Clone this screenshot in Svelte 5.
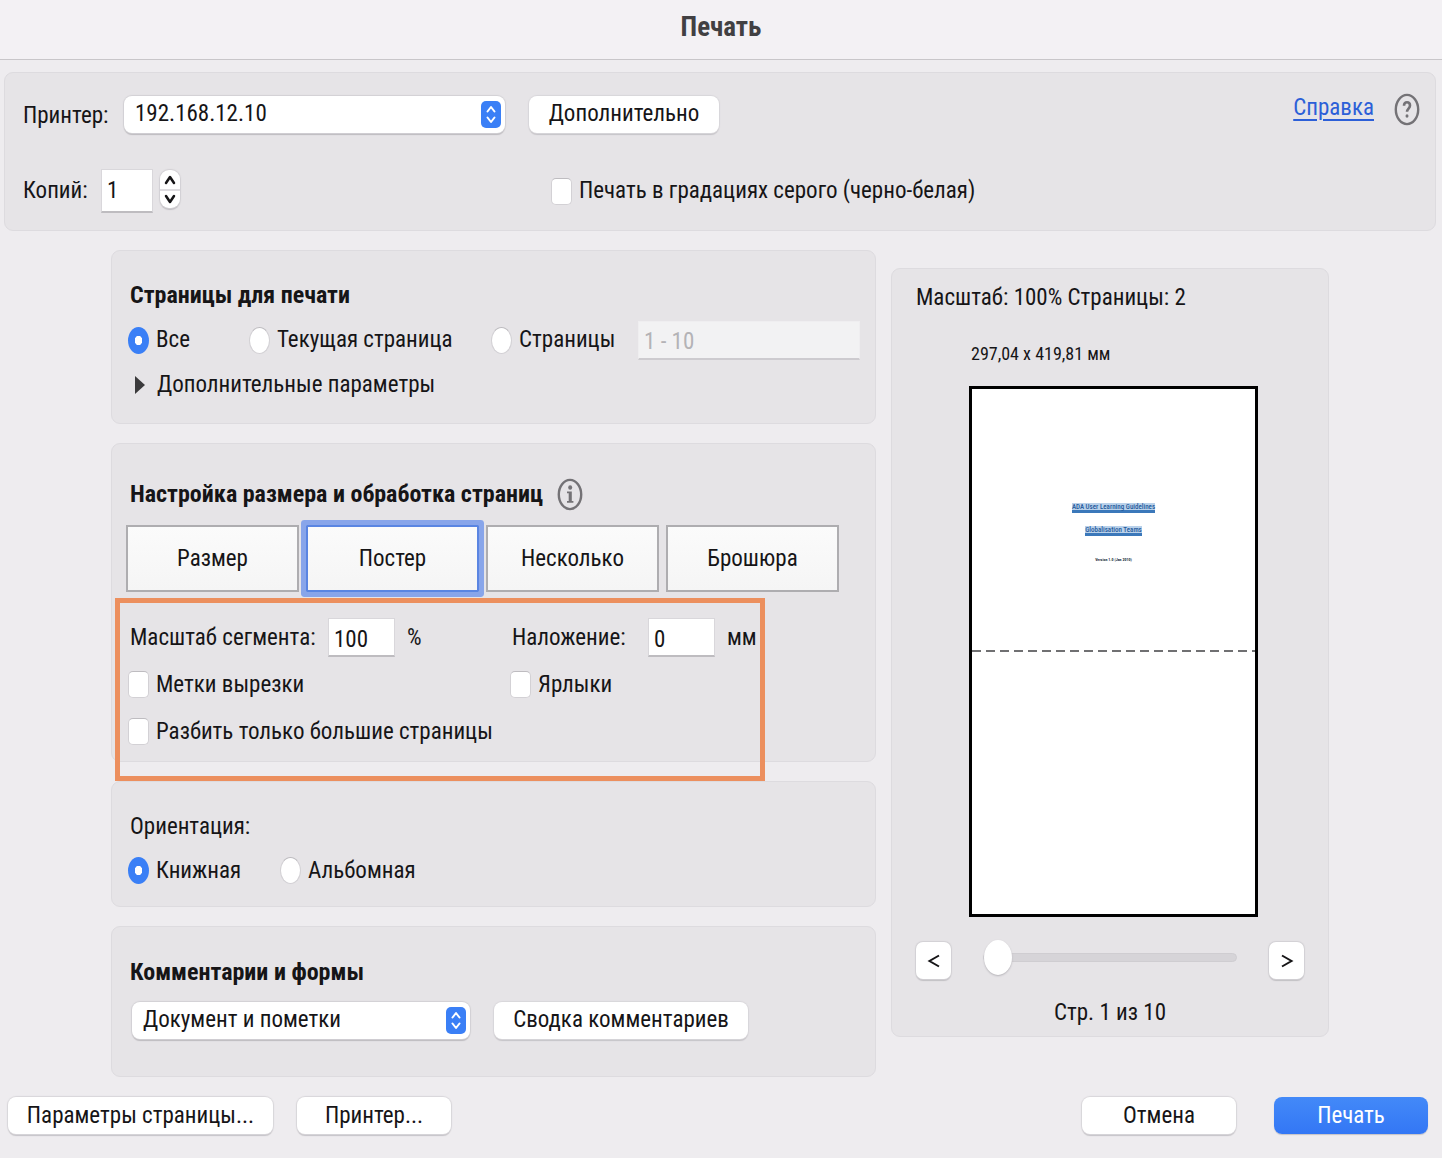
<script>
  let printer = $state('192.168.12.10');
  let copies = $state('1');
  let grayscale = $state(false);
  let pages = $state('all');
  let mode = $state('Постер');
  let scale = $state('100');
  let overlap = $state('0');
  let orientation = $state('portrait');
  let forms = $state('Документ и пометки');
  let page = $state(1);
  const modes = ['Размер', 'Постер', 'Несколько', 'Брошюра'];
  const pageCount = 10;

  function step(delta) {
    copies = String(Math.max(1, Number(copies) + delta));
  }
</script>

{#snippet popupIcon()}
  <svg class="popup-icon" viewBox="0 0 20 27" aria-hidden="true">
    <rect width="20" height="27" rx="5" />
    <path d="M6.5 10.5 10 6 13.500 10.500M6.500 16.500 10 21 13.500 16.500" />
  </svg>
{/snippet}

<div class="dialog">
  <header class="titlebar"><h1>Печать</h1></header>

  <section class="panel top">
    <div class="row first">
      <label for="printer">Принтер:</label>
      <div class="popup printer">
        <select id="printer" bind:value={printer}>
          <option>192.168.12.10</option>
        </select>
        {@render popupIcon()}
      </div>
      <button class="push advanced">Дополнительно</button>
      <a class="help" href="#help">Справка</a>
      <button class="icon-button" aria-label="Помощь">
        <svg viewBox="0 0 26 33" width="26" height="33" aria-hidden="true">
          <ellipse cx="13" cy="16.500" rx="11.200" ry="14.600" />
          <path class="mark" d="M10 12.800c0-2.200 1.200-3.500 3-3.500s3 1.200 3 3.200c0 2.900-3 3.200-3 6.300" />
          <ellipse class="dot" cx="13" cy="23" rx="1.500" ry="1.800" />
        </svg>
      </button>
    </div>
    <div class="row second">
      <label for="copies">Копий:</label>
      <input id="copies" class="field copies" type="text" bind:value={copies} />
      <div class="stepper">
        <button aria-label="Больше" onclick={() => step(1)}>
          <svg viewBox="0 0 20 19" aria-hidden="true"><path d="M6 13 10 7 14 13" /></svg>
        </button>
        <button aria-label="Меньше" onclick={() => step(-1)}>
          <svg viewBox="0 0 20 19" aria-hidden="true"><path d="M6 5 10 11 14 5" /></svg>
        </button>
      </div>
      <label class="choice gray"><input type="checkbox" bind:checked={grayscale} />Печать в градациях серого (черно-белая)</label>
    </div>
  </section>

  <main class="content">
    <div class="settings">
      <section class="panel pages">
        <h2>Страницы для печати</h2>
        <div class="page-row">
          <label class="choice"><input type="radio" name="pages" value="all" bind:group={pages} />Все</label>
          <label class="choice"><input type="radio" name="pages" value="current" bind:group={pages} />Текущая страница</label>
          <label class="choice"><input type="radio" name="pages" value="range" bind:group={pages} />Страницы</label>
          <input class="field range" type="text" aria-label="Диапазон страниц" value="1 - 10" disabled />
        </div>
        <button class="disclosure">
          <svg viewBox="0 0 12 20" width="12" height="20" aria-hidden="true"><path d="M1 1 11 10 1 19Z" /></svg>
          Дополнительные параметры
        </button>
      </section>

      <section class="panel sizing">
        <div class="heading">
          <h2>Настройка размера и обработка страниц</h2>
          <button class="icon-button" aria-label="Сведения">
            <svg viewBox="0 0 26 33" width="26" height="33" aria-hidden="true">
              <ellipse cx="13" cy="16.500" rx="11.200" ry="14.600" />
              <ellipse class="dot" cx="13.200" cy="9.500" rx="2" ry="2.200" />
              <path class="dot" d="M10 13.500h4.800v9.500h1.600v1.800H10V23h1.700v-7.700H10Z" />
            </svg>
          </button>
        </div>
        <div class="tabs">
          {#each modes as name}
            <button class:active={mode === name} aria-pressed={mode === name} onclick={() => (mode = name)}>{name}</button>
          {/each}
        </div>
        <div class="options">
          <div class="measure">
            <label for="scale">Масштаб сегмента:</label>
            <input id="scale" class="field small" type="text" bind:value={scale} />
            <span>%</span>
          </div>
          <div class="measure overlap">
            <label for="overlap">Наложение:</label>
            <input id="overlap" class="field small" type="text" bind:value={overlap} />
            <span>мм</span>
          </div>
          <label class="choice"><input type="checkbox" />Метки вырезки</label>
          <label class="choice"><input type="checkbox" />Ярлыки</label>
          <label class="choice"><input type="checkbox" />Разбить только большие страницы</label>
        </div>
        <div class="highlight"></div>
      </section>

      <section class="panel orientation">
        <p>Ориентация:</p>
        <div class="orient-row">
          <label class="choice"><input type="radio" name="orientation" value="portrait" bind:group={orientation} />Книжная</label>
          <label class="choice"><input type="radio" name="orientation" value="landscape" bind:group={orientation} />Альбомная</label>
        </div>
      </section>

      <section class="panel comments">
        <h2>Комментарии и формы</h2>
        <div class="comment-row">
          <div class="popup forms">
            <select aria-label="Комментарии и формы" bind:value={forms}>
              <option>Документ и пометки</option>
            </select>
            {@render popupIcon()}
          </div>
          <button class="push summary">Сводка комментариев</button>
        </div>
      </section>
    </div>

    <section class="panel preview">
      <p class="scale-info">Масштаб: 100% Страницы: 2</p>
      <div class="sheet-area">
        <p class="dimensions">297,04 x 419,81 мм</p>
        <div class="sheet">
          <div class="sheet-half printed">
            <span class="doc-title">ADA User Learning Guidelines</span>
            <span class="doc-title">Globalisation Teams</span>
            <span class="doc-version">Version 1.0 (Jan 2010)</span>
          </div>
          <div class="sheet-half"></div>
        </div>
      </div>
      <div class="pager">
        <button class="nav" aria-label="Предыдущая" onclick={() => (page = Math.max(1, page - 1))}>
          <svg viewBox="0 0 14 16" width="14" height="16" aria-hidden="true"><path d="M12 2.500 2.500 8 12 13.500" /></svg>
        </button>
        <input type="range" min="1" max={pageCount} bind:value={page} aria-label="Страница" />
        <button class="nav" aria-label="Следующая" onclick={() => (page = Math.min(pageCount, page + 1))}>
          <svg viewBox="0 0 14 16" width="14" height="16" aria-hidden="true"><path d="M2 2.500 11.500 8 2 13.500" /></svg>
        </button>
      </div>
      <p class="page-info">Стр. {page} из {pageCount}</p>
    </section>
  </main>

  <footer>
    <button class="push setup">Параметры страницы...</button>
    <button class="push wide">Принтер...</button>
    <span class="spacer"></span>
    <button class="push wide cancel">Отмена</button>
    <button class="push wide primary">Печать</button>
  </footer>
</div>

<style>
  :global(body) {
    background: #eeecef;
  }
  .dialog,
  .dialog * {
    box-sizing: border-box;
  }
  .dialog {
    min-height: 100vh;
    font-family: 'Roboto Condensed', 'Liberation Sans Narrow', Roboto, sans-serif;
    font-size: 23px;
    line-height: 28px;
    color: #161517;
    background: #eeecef;
  }
  h1,
  h2,
  p {
    margin: 0;
  }
  h2 {
    font-size: 24px;
    line-height: 44px;
    font-weight: 700;
    padding-left: 2px;
  }
  button,
  input,
  select {
    font: inherit;
    color: inherit;
    margin: 0;
  }
  button {
    border: 0;
    padding: 0;
    background: none;
  }
  label,
  p,
  button {
    white-space: nowrap;
  }
  .titlebar {
    height: 60px;
    padding-top: 11px;
    text-align: center;
    background: #f3f1f4;
    border-bottom: 1px solid #c8c6c9;
  }
  h1 {
    font-size: 27px;
    line-height: 32px;
    color: #414042;
  }
  .panel {
    background: #e6e4e7;
    border: 1px solid #dddbdf;
    border-radius: 9px;
  }
  .top {
    margin: 12px 6px 0 4px;
    height: 159px;
    padding: 20px 15px 0 18px;
  }
  .row {
    display: flex;
    align-items: center;
  }
  .first {
    height: 42px;
  }
  .second {
    height: 44px;
    margin-top: 34px;
  }
  .first label {
    width: 101px;
    padding-top: 3px;
  }
  .second > label[for] {
    width: 78px;
  }
  .popup {
    position: relative;
  }
  .printer {
    width: 381px;
    margin-right: 24px;
  }
  .forms {
    width: 338px;
  }
  select {
    display: block;
    appearance: none;
    width: 100%;
    height: 37px;
    border: 0;
    border-radius: 8px;
    padding: 0 36px 0 11px;
    background: #fff;
    box-shadow: 0 0 1px 1px #d2d0d4, 0 2px 1px #bbb9bd;
  }
  .popup-icon {
    position: absolute;
    top: 5px;
    right: 4px;
    width: 20px;
    height: 27px;
    pointer-events: none;
  }
  .popup-icon rect {
    fill: #3a7ff6;
  }
  .popup-icon path {
    fill: none;
    stroke: #fff;
    stroke-width: 2;
    stroke-linecap: round;
    stroke-linejoin: round;
  }
  .push {
    height: 37px;
    border-radius: 8px;
    background: #fff;
    box-shadow: 0 0 1px 1px #d8d6da, 0 2px 1px #c4c2c6;
  }
  .advanced {
    width: 190px;
  }
  .help {
    margin: 0 20px 12px auto;
    color: #2c5fd8;
    text-underline-offset: 4px;
    text-decoration-thickness: 2px;
  }
  .first .icon-button {
    margin-bottom: 10px;
  }
  .icon-button {
    width: 26px;
    height: 33px;
  }
  .icon-button svg {
    display: block;
    fill: none;
    stroke: #747276;
    stroke-width: 2.400;
  }
  .icon-button .mark {
    stroke-width: 2.600;
  }
  .icon-button .dot {
    fill: #747276;
    stroke: none;
  }
  .field {
    height: 39px;
    border: 1px solid #d9d7db;
    border-bottom: 2px solid #bebcc0;
    border-radius: 0;
    background: #fff;
    padding: 4px 5px 0;
  }
  .copies {
    width: 52px;
    height: 44px;
    padding-top: 0;
  }
  .stepper {
    display: flex;
    flex-direction: column;
    width: 20px;
    height: 38px;
    margin: 0 371px 4px 7px;
    border-radius: 9px;
    background: #fff;
    box-shadow: 0 0 1px 1px #d2d0d4, 0 2px 1px #c0bec2;
  }
  .stepper button {
    height: 19px;
  }
  .stepper button + button {
    border-top: 2px solid #dddbdf;
  }
  .stepper svg {
    display: block;
    width: 20px;
    height: 19px;
    fill: none;
    stroke: #161517;
    stroke-width: 2.500;
    stroke-linecap: round;
    stroke-linejoin: round;
  }
  .choice {
    display: flex;
    align-items: center;
    gap: 7px;
  }
  .choice input {
    appearance: none;
    flex: none;
    width: 21px;
    height: 27px;
    background: #fff;
    border: 1px solid #d3d1d5;
    border-top-color: #bebcc0;
  }
  .choice input[type='checkbox'] {
    border-radius: 5px;
  }
  .choice input[type='checkbox']:checked {
    background: #3a7ff6;
  }
  .choice input[type='radio'] {
    border-radius: 50%;
  }
  .choice input[type='radio']:checked {
    border: 0;
    background: radial-gradient(4px 5px, #fff 90%, #3a7ff6 100%);
  }
  .content {
    display: grid;
    grid-template-columns: 765fr 438fr;
    gap: 15px;
    padding: 19px 113px 0 111px;
  }
  .settings {
    display: grid;
    gap: 19px;
    align-content: start;
  }
  .settings .panel {
    padding: 23px 15px 0 16px;
  }
  .settings .pages {
    padding-top: 22px;
    padding-bottom: 16px;
  }
  .page-row {
    display: grid;
    grid-template-columns: 121px 242px 147px 1fr;
    align-items: center;
    height: 46px;
  }
  .range {
    width: 100%;
    background: #f2f2f3;
    border-color: #efeef0;
    border-bottom-color: #cdcbcf;
    color: #b4b3b6;
  }
  .disclosure {
    display: flex;
    align-items: center;
    gap: 11px;
    height: 44px;
    padding-left: 6px;
  }
  .disclosure svg {
    fill: #3b3a3c;
  }
  .settings .sizing {
    position: relative;
    padding-bottom: 6px;
  }
  .heading {
    display: flex;
    align-items: center;
    gap: 14px;
    height: 54px;
  }
  .tabs {
    display: grid;
    grid-template-columns: repeat(4, 173px);
    gap: 7px;
    margin: 4px 0 22px -2px;
  }
  .tabs button {
    height: 67px;
    border: 2px solid #aeadb0;
    background: linear-gradient(#fbfbfb, #f5f5f5);
  }
  .tabs .active {
    border-color: #5a85e2;
    outline: 0;
    box-shadow: 0 0 0 5px #88a5ea;
    border-radius: 1px;
  }
  .options {
    display: grid;
    grid-template-columns: 382px 1fr;
    grid-auto-rows: 47px;
    align-items: center;
  }
  .measure {
    display: grid;
    grid-template-columns: 198px 67px auto;
    align-items: center;
    padding-left: 2px;
  }
  .measure span {
    padding-left: 12px;
  }
  .overlap {
    grid-template-columns: 136px 67px auto;
  }
  .highlight {
    position: absolute;
    top: 154px;
    left: 3px;
    width: 650px;
    height: 183px;
    border: 5px solid #ec8f5e;
    pointer-events: none;
  }
  .settings .orientation {
    padding-bottom: 14px;
  }
  .orientation p {
    padding-left: 2px;
    line-height: 44px;
  }
  .orient-row {
    display: grid;
    grid-template-columns: 152px 1fr;
    align-items: center;
    height: 43px;
  }
  .settings .comments {
    padding-bottom: 30px;
  }
  .comment-row {
    display: flex;
    align-items: center;
    gap: 24px;
    height: 52px;
    padding-left: 4px;
  }
  .summary {
    width: 254px;
  }
  .preview {
    display: flex;
    flex-direction: column;
    align-self: start;
    margin-top: 18px;
    padding: 15px 24px 9px;
  }
  .sheet-area {
    width: 289px;
    margin: 28px 0 0 53px;
  }
  .dimensions {
    font-size: 18px;
    padding-left: 2px;
  }
  .sheet {
    height: 531px;
    margin-top: 18px;
    border: 3px solid #000;
    background: #fff;
    display: grid;
    grid-template-rows: 1fr 1fr;
  }
  .printed {
    display: flex;
    flex-direction: column;
    align-items: center;
    padding-top: 114px;
    background: repeating-linear-gradient(90deg, #707072 0 9px, transparent 9px 14px) bottom / 100% 2px no-repeat;
  }
  .doc-title {
    height: 10px;
    margin-bottom: 13px;
    font-size: 7px;
    line-height: 8px;
    font-weight: 500;
    color: #1f5a9c;
    background: #b9d1ea;
    border-bottom: 3px solid #3b78ba;
  }
  .doc-version {
    margin-top: 7px;
    font-size: 4px;
    line-height: 7px;
    font-weight: 700;
    color: #1e2a44;
  }
  .pager {
    display: flex;
    justify-content: space-between;
    align-items: center;
    margin-top: 19px;
  }
  .nav {
    display: grid;
    place-items: center;
    width: 35px;
    height: 37px;
    margin-top: 6px;
    border-radius: 7px;
    background: #fff;
    box-shadow: 0 0 1px 1px #d2d0d4, 0 2px 1px #c0bec2;
  }
  .nav svg {
    fill: none;
    stroke: #161517;
    stroke-width: 2;
  }
  input[type='range'] {
    appearance: none;
    width: 254px;
    height: 35px;
    background: transparent;
  }
  input[type='range']::-webkit-slider-runnable-track {
    height: 9px;
    border: 1px solid #cfcdd1;
    border-radius: 5px;
    background: #d6d4d8;
  }
  input[type='range']::-webkit-slider-thumb {
    appearance: none;
    width: 28px;
    height: 35px;
    margin-top: -14px;
    border-radius: 50%;
    background: #fff;
    box-shadow: 0 1px 2px #b5b3b8;
  }
  .page-info {
    margin-top: 20px;
    text-align: center;
  }
  footer {
    display: flex;
    margin-top: 20px;
    padding: 0 14px 24px 8px;
  }
  .setup {
    width: 265px;
    margin-right: 24px;
  }
  .wide {
    width: 154px;
  }
  .spacer {
    flex: 1;
  }
  .cancel {
    margin-right: 38px;
  }
  .primary {
    color: #fff;
    background: linear-gradient(#4389f8, #3377f5);
    box-shadow: 0 1px 1px #c4c2c6;
  }
</style>
